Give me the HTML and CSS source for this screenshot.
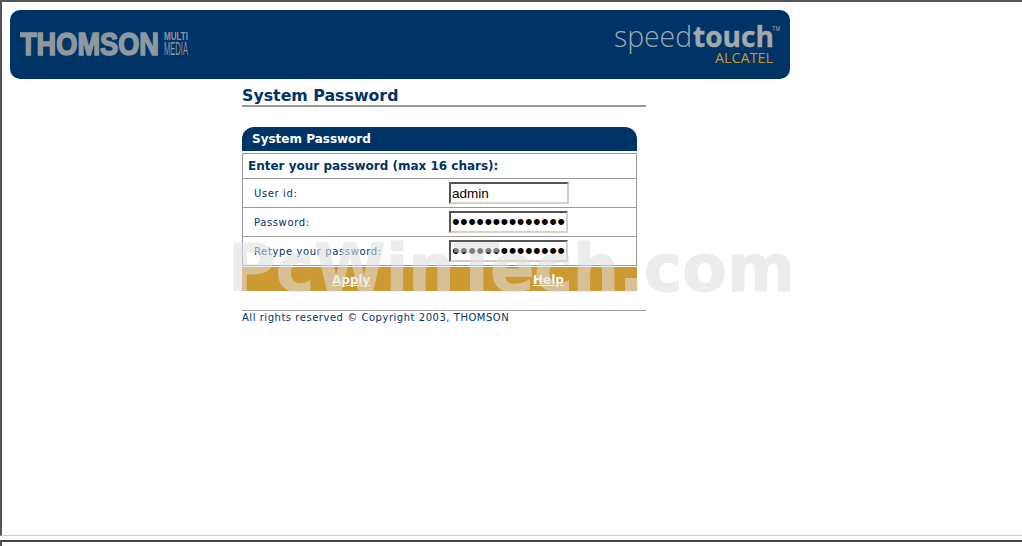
FILE: index.html
```html
<!DOCTYPE html>
<html lang="en">
<head>
<meta charset="utf-8">
<title>System Password</title>
<link rel="stylesheet" href="styles.css">
</head>
<body>
<div class="frame">
  <header class="banner">
    <svg class="logo-left" width="180" height="30" viewBox="0 0 180 30" role="img" aria-label="Thomson Multimedia">
      <text class="thomson" x="0" y="26" textLength="139" lengthAdjust="spacingAndGlyphs">THOMSON</text>
      <text class="multi" x="144" y="11" textLength="24" lengthAdjust="spacingAndGlyphs">MULTI</text>
      <text class="media" x="144" y="26" textLength="24" lengthAdjust="spacingAndGlyphs">MEDIA</text>
    </svg>
    <svg class="logo-right" width="170" height="46" viewBox="0 0 170 46" role="img" aria-label="SpeedTouch Alcatel">
      <text class="speed" x="0" y="24" textLength="78" lengthAdjust="spacingAndGlyphs">speed</text>
      <text class="touch" x="79" y="24" textLength="81" lengthAdjust="spacingAndGlyphs">touch</text>
      <text class="tm" x="158" y="8" textLength="8" lengthAdjust="spacingAndGlyphs">TM</text>
      <text class="alcatel" x="101" y="39.5" textLength="58" lengthAdjust="spacingAndGlyphs">ALCATEL</text>
    </svg>
  </header>
  <main class="content">
    <h1 class="title">System Password</h1>
    <section class="panel">
      <h2 class="panel-head">System Password</h2>
      <form class="form-box">
        <div class="form-intro">Enter your password (max 16 chars):</div>
        <div class="row"><label class="row-label">User id:</label><input class="field" type="text" value="admin"></div>
        <div class="row"><label class="row-label">Password:</label><input class="field secret" type="password" value="xxxxxxxxxxxxxxxx"></div>
        <div class="row"><label class="row-label">Retype your password:</label><input class="field secret" type="password" value="xxxxxxxxxxxxxxxx"></div>
      </form>
      <nav class="actions"><a class="action action-apply" href="#">Apply</a><a class="action action-help" href="#">Help</a></nav>
    </section>
    <footer class="foot">All rights reserved © Copyright 2003, THOMSON</footer>
  </main>
</div>
<div class="lower"></div>
<div class="watermark">PcWinTech.com</div>
</body>
</html>
```
FILE: styles.css
```css
html, body { margin: 0; padding: 0; background: #fff; overflow: hidden; }
body { width: 1022px; height: 546px; position: relative; font-family: "DejaVu Sans", Verdana, sans-serif; color: #003366; }

.frame {
  box-sizing: border-box;
  height: 536px;
  padding: 8px 0 0 8px;
  border-top: 2px solid #555;
  border-left: 2px solid #555;
  border-bottom: 1px solid #d4d0c8;
}
.lower { box-sizing: border-box; height: 6px; margin-top: 4px; border-top: 2px solid #444; border-left: 2px solid #555; }

.banner {
  width: 780px; height: 69px;
  background: #003366;
  border-radius: 10px;
  display: flex; justify-content: space-between; align-items: flex-start;
  box-sizing: border-box;
  padding: 13px 6px 0 10px;
}
.logo-left { display: block; margin-top: 6px; }
.logo-right { display: block; }
.thomson { font: 700 31px "Liberation Sans", sans-serif; fill: #8f979f; stroke: #8f979f; stroke-width: 1.6px; }
.multi { font: 700 10px "Liberation Sans", sans-serif; fill: #8f979f; }
.media { font: 400 18px "Liberation Sans", sans-serif; fill: #8f979f; }
.speed { font: 300 29px "Open Sans", sans-serif; fill: #a3a9af; }
.touch { font: 700 29px "Open Sans", sans-serif; fill: #a3a9af; stroke: #a3a9af; stroke-width: .4px; }
.tm { font: 400 7px "Liberation Sans", sans-serif; fill: #a3a9af; }
.alcatel { font: 400 14px "Open Sans", sans-serif; fill: #cc9922; }

.content { width: 404px; margin-left: 232px; }
.title {
  margin: 7px 0 0;
  height: 19px;
  font-size: 15.8px; line-height: 19px; font-weight: 700;
  border-bottom: 2px solid #999;
}
.panel { width: 395px; margin-top: 20px; }
.panel-head {
  margin: 0;
  height: 24px;
  background: #003366; color: #fff;
  border-radius: 12px 12px 0 0;
  font-size: 12px; line-height: 25px; font-weight: 700;
  padding-left: 10px;
}
.form-box { display: block; margin-top: 2px; border: 1px solid #999; }
.form-intro { height: 24px; line-height: 25px; font-size: 12px; font-weight: 700; padding-left: 5px; }
.row {
  display: flex; align-items: center;
  height: 28px;
  border-top: 1px solid #999;
  padding-left: 11px;
}
.row-label { width: 195px; font-size: 10px; letter-spacing: .62px; }
.field {
  box-sizing: border-box;
  width: 120px; height: 22px;
  margin: 0; padding: 0 1px;
  border: 2px solid; border-color: #555 #d4d0c8 #d4d0c8 #555;
  font: 13.5px "Liberation Sans", sans-serif; color: #000;
  background: #fff; outline: none;
}
.secret { width: 119px; font-size: 22px; letter-spacing: .4px; }
.actions {
  margin-top: 1px;
  height: 24px;
  background: #cc9933;
  position: relative;
}
.action { position: absolute; top: 5px; color: #fff; font-size: 12px; line-height: 16px; font-weight: 700; }
.action-apply { left: 90px; }
.action-help { left: 291px; }
.foot {
  margin-top: 19px;
  border-top: 1px solid #999;
  font-size: 10px; line-height: 14px; letter-spacing: .53px;
}
.watermark {
  position: absolute; left: 228px; top: 231px;
  font-size: 65px; line-height: 76px; font-weight: 700;
  color: #dedede;
  opacity: .57;
  -webkit-text-stroke: 1px #dedede;
  white-space: nowrap;
  pointer-events: none;
}
```
